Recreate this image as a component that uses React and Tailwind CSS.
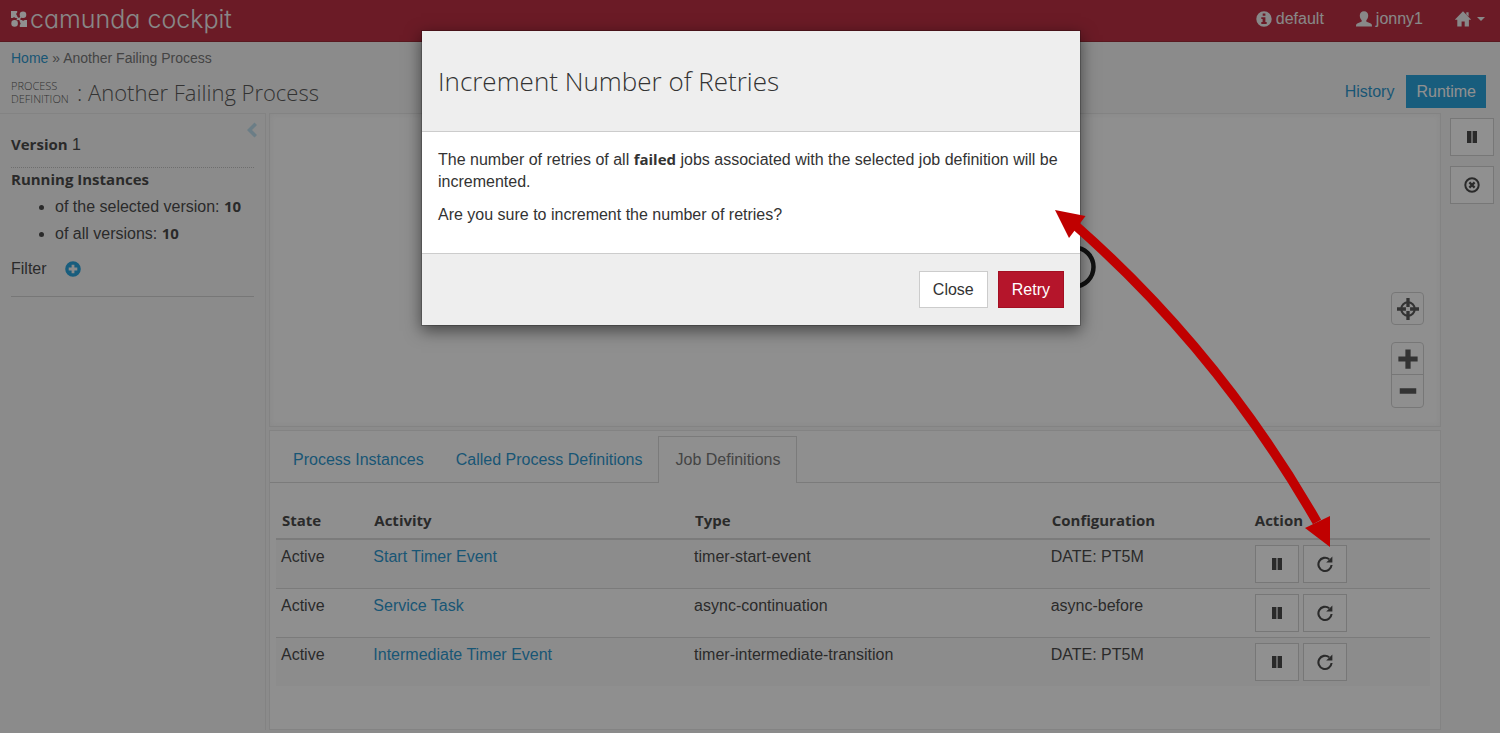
import React from "react";

const GLYPHS = {
  info: (
    <path fillRule="evenodd" d="M8 0.3a7.7 7.7 0 1 0 0 15.4A7.7 7.7 0 0 0 8 0.3zM6.700 2.500h2.700v2.300H6.700zM5.300 6.200h4.100v4.900h1.300v2H5.300v-2h1.300V8.100H5.300z" />
  ),
  user: (
    <path d="M8 0.2c2.600 0 4.200 1.700 4.200 4.400 0 2-.8 3.600-1.800 4.600-.3.400-.3 1.300.3 1.600l4.100 1.700c.9.400 1.200 1.200 1.200 3H0c0-1.800.3-2.600 1.200-3l4.100-1.700c.6-.3.600-1.200.3-1.600-1-1-1.800-2.600-1.800-4.600C3.800 1.900 5.400.2 8 .2z" />
  ),
  home: (
    <path d="M8 .2 16.200 8.800h-2.300V15.600H9.700V10.500H6.600v5.100H2.300V8.800H-.2L8 .2zM11.300 1.300h2.300v4.300l-2.300-2.400z" />
  ),
  pause: <path d="M3 2h4.400v12H3zM8.600 2H13v12H8.600z" />,
  removeCircle: (
    <>
      <circle cx="8" cy="8" r="6.700" fill="none" stroke="currentColor" strokeWidth="2" />
      <path d="M5.400 5.400 10.600 10.600M10.600 5.400 5.400 10.600" fill="none" stroke="currentColor" strokeWidth="2.200" />
    </>
  ),
  repeat: (
    <>
      <path d="M12.200 3.200A6.600 6.600 0 1 0 14.600 9" fill="none" stroke="currentColor" strokeWidth="2.100" />
      <path d="M15.400 .4v6.200H9.200z" />
    </>
  ),
  chevronLeft: <path d="M10.500 .6 13 3.100 8 8l5 4.900-2.500 2.500L3 8z" />,
  plus: <path d="M6.100 1h3.800v5.100H15v3.800H9.900V15H6.100V9.900H1V6.100h5.100z" />,
  minus: <path d="M2 6h12v4H2z" />,
  plusCircle: (
    <path fillRule="evenodd" d="M8 .2a7.800 7.800 0 1 0 0 15.600A7.800 7.800 0 0 0 8 .2zM6.600 3.700h2.800v2.900h2.900v2.800H9.400v2.900H6.600V9.400H3.700V6.600h2.900z" />
  ),
  screenshot: (
    <>
      <circle cx="8" cy="8" r="4.900" fill="none" stroke="currentColor" strokeWidth="1.500" />
      <path d="M6.800 0h2.400v6.500H6.800zM6.800 9.500h2.400V16H6.800zM0 6.800h6.500v2.400H0zM9.500 6.800H16v2.400H9.500z" />
    </>
  ),
};

function Glyph({ name, className = "size-4" }) {
  return (
    <svg viewBox="0 0 16 16" fill="currentColor" aria-hidden="true" className={className}>
      {GLYPHS[name]}
    </svg>
  );
}

function LogoMark() {
  return (
    <svg viewBox="0 0 16 16" fill="currentColor" aria-hidden="true" className="size-4">
      <path d="M0 0h6.200v1.500a1.800 1.800 0 0 0 0 3.200V7H4.600a1.800 1.800 0 0 0-3 0H0z" />
      <circle cx="12" cy="3.700" r="3.300" />
      <circle cx="3.600" cy="12.400" r="3.300" />
      <path d="M8.800 16V14a1.800 1.800 0 0 0 0-3V9h2a1.600 1.600 0 0 0 2.800 0H16v7z" />
      <path d="M5 5.500l3 2.500 3.500 3.500M10 6 8 8 5.700 8.500" fill="none" stroke="currentColor" strokeWidth="1.400" />
    </svg>
  );
}

function IconButton({ icon, label }) {
  return (
    <button
      type="button"
      aria-label={label}
      className="flex h-[38px] w-11 items-center justify-center border border-[#ccc] bg-white text-[#333]"
    >
      <Glyph name={icon} />
    </button>
  );
}

function Header() {
  return (
    <header className="flex h-[42px] items-center justify-between border-b border-[#92101f] bg-[#b5152b] pr-[15px] pb-[3px] pl-[11px] text-white">
      <a href="#home" className="flex items-center gap-[3px]">
        <LogoMark />
        <span className="font-['Inter','Open_Sans',sans-serif] text-[25px] leading-9 font-light text-[#eee] [font-feature-settings:'cv11']">
          camunda cockpit
        </span>
      </a>
      <nav className="flex items-center gap-8 text-[#eee]">
        <a href="#engine" className="flex items-center gap-1">
          <Glyph name="info" />
          default
        </a>
        <a href="#user" className="flex items-center gap-1">
          <Glyph name="user" />
          jonny1
        </a>
        <a href="#apps" aria-label="Apps" className="flex items-center gap-1.5">
          <Glyph name="home" />
          <svg viewBox="0 0 8 4" fill="currentColor" aria-hidden="true" className="h-1 w-2">
            <path d="M0 0h8L4 4z" />
          </svg>
        </a>
      </nav>
    </header>
  );
}

function TitleBar() {
  return (
    <div className="h-[71px] pr-[14px] pl-[11px] pt-1.5">
      <div className="text-[14px] leading-5 text-[#666]">
        <a href="#home" className="text-[#0e8ac8]">Home</a> » Another Failing Process
      </div>
      <div className="flex items-center justify-between pt-[7px]">
        <h1 className="flex items-center font-['Open_Sans',sans-serif] text-[#444]">
          <span className="w-[66px] text-[11px] leading-[13px] font-light">
            PROCESS
            <br />
            DEFINITION
          </span>
          <span className="text-[22px] leading-8 font-light">: Another Failing Process</span>
        </h1>
        <nav className="flex">
          <a href="#history" className="px-3 leading-[33px] text-[#0e8ac8]">History</a>
          <a href="#runtime" className="bg-[#0e98d8] px-2.5 leading-[33px] text-white">Runtime</a>
        </nav>
      </div>
    </div>
  );
}

const strong = "font-['Open_Sans',sans-serif] text-[15px] font-bold";

function Sidebar() {
  return (
    <aside className="w-[266px] shrink-0 border-t border-r border-[#e4e4e4] pr-[11px] pl-[11px]">
      <div className="flex h-[54px] justify-between border-b border-dotted border-[#bbb]">
        <p className="pt-[19px] leading-[22px]">
          <span className={strong}>Version</span> 1
        </p>
        <button type="button" aria-label="Collapse sidebar" className="mt-2 -mr-1.5 h-4 text-[#b4d9ea]">
          <Glyph name="chevronLeft" />
        </button>
      </div>
      <h2 className={`${strong} leading-[22px]`}>Running Instances</h2>
      <ul className="list-disc pt-[3px] pl-11 leading-[27px]">
        <li>of the selected version: <b className={strong}>10</b></li>
        <li>of all versions: <b className={strong}>10</b></li>
      </ul>
      <div className="flex h-[50px] items-center gap-[18px] border-b border-[#ccc] pb-1.5">
        Filter
        <button type="button" aria-label="Add filter" className="text-[#0e98d8]">
          <Glyph name="plusCircle" />
        </button>
      </div>
    </aside>
  );
}

function Diagram() {
  const zoomButton = "flex h-8 items-center justify-center text-[#444]";
  return (
    <section className="relative h-[314px] border border-[#e4e4e4] bg-[#fdfdfd] shadow-[inset_0_0_6px_#eee]">
      <svg viewBox="0 0 44 44" aria-hidden="true" className="absolute top-[131px] right-[344px] size-11">
        <circle cx="22" cy="22" r="19.500" fill="none" stroke="#000" strokeWidth="4.500" />
      </svg>
      <div className="absolute top-[178px] right-4 flex flex-col gap-[17px]">
        <button type="button" aria-label="Reset zoom" className="flex size-[33px] items-center justify-center rounded-sm border border-[#ccc] text-[#444]">
          <Glyph name="screenshot" className="size-[22px]" />
        </button>
        <div className="flex w-[33px] flex-col divide-y divide-[#ccc] rounded-sm border border-[#ccc]">
          <button type="button" aria-label="Zoom in" className={zoomButton}>
            <Glyph name="plus" className="size-[22px]" />
          </button>
          <button type="button" aria-label="Zoom out" className={zoomButton}>
            <Glyph name="minus" className="size-[22px]" />
          </button>
        </div>
      </div>
    </section>
  );
}

const JOBS = [
  ["Active", "Start Timer Event", "timer-start-event", "DATE: PT5M"],
  ["Active", "Service Task", "async-continuation", "async-before"],
  ["Active", "Intermediate Timer Event", "timer-intermediate-transition", "DATE: PT5M"],
];

function JobDefinitions() {
  const head = `${strong} px-1.5 pt-[5px] pb-[7px] leading-[22px]`;
  const cell = "px-[5px] py-[5px]";
  return (
    <section className="flex-1 border border-[#e4e4e4] bg-[#fdfdfd]">
      <div role="tablist" className="flex h-[52px] items-end border-b border-[#d4d4d4] pl-[7px] leading-[45px]">
        <button type="button" role="tab" aria-selected="false" className="px-4 text-[#0e8ac8]">
          Process Instances
        </button>
        <button type="button" role="tab" aria-selected="false" className="px-4 text-[#0e8ac8]">
          Called Process Definitions
        </button>
        <button type="button" role="tab" aria-selected="true" className="-mb-px border border-b-0 border-[#d4d4d4] bg-[#fdfdfd] px-4 pb-px text-[#666]">
          Job Definitions
        </button>
      </div>
      <div className="pt-[21px] pr-2.5 pl-1.5">
        <table className="w-full table-fixed border-collapse text-left">
          <thead>
            <tr className="border-b-2 border-[#d4d4d4]">
              <th className={`${head} w-[8%]`}>State</th>
              <th className={`${head} w-[27.8%]`}>Activity</th>
              <th className={`${head} w-[30.9%]`}>Type</th>
              <th className={`${head} w-[17.6%]`}>Configuration</th>
              <th className={head}>Action</th>
            </tr>
          </thead>
          <tbody className="align-top leading-6">
            {JOBS.map(([state, activity, type, config]) => (
              <tr key={activity} className="border-t border-[#d4d4d4] odd:bg-[#f7f7f7]">
                <td className={cell}>{state}</td>
                <td className={cell}><a href="#activity" className="text-[#0e8ac8]">{activity}</a></td>
                <td className={cell}>{type}</td>
                <td className={cell}>{config}</td>
                <td className="px-1.5 py-[5px]">
                  <div className="flex gap-1">
                    <IconButton icon="pause" label={`Suspend ${activity}`} />
                    <IconButton icon="repeat" label={`Retry ${activity}`} />
                  </div>
                </td>
              </tr>
            ))}
          </tbody>
        </table>
      </div>
    </section>
  );
}

function RetryDialog() {
  return (
    <div className="absolute inset-0 flex items-start justify-center bg-[#222]/50 pt-[30px]">
      <div
        role="dialog"
        aria-modal="true"
        aria-labelledby="dialog-title"
        className="ml-0.5 w-[660px] border border-black/20 bg-[#eee] bg-clip-padding shadow-[0_5px_15px_rgba(0,0,0,0.5)]"
      >
        <h2 id="dialog-title" className="border-b border-[#ccc] px-4 py-[30px] font-['Open_Sans',sans-serif] text-[26px] leading-10 font-light">
          Increment Number of Retries
        </h2>
        <div className="bg-white px-4 pt-4 pb-[27px] leading-[22px]">
          <p>
            The number of retries of all <b className={strong}>failed</b> jobs associated with the selected job definition will be incremented.
          </p>
          <p className="pt-[11px]">Are you sure to increment the number of retries?</p>
        </div>
        <div className="flex justify-end gap-2.5 border-t border-[#ccc] px-4 py-[17px]">
          <button type="button" className="h-[37px] border border-[#ccc] bg-white px-[13px]">Close</button>
          <button type="button" className="h-[37px] border border-[#a30f22] bg-[#b5152b] px-[13px] text-white">Retry</button>
        </div>
      </div>
      <svg viewBox="0 0 276 338" aria-hidden="true" className="absolute top-[210px] left-1/2 ml-[305px] h-[338px] w-[276px]" fill="#c00000">
        <path d="M20 15Q165 142.500 262 312" fill="none" stroke="#c00000" strokeWidth="9.500" />
        <path d="M0 0 30.500 6 14 28zM275 337 250 318 275 306z" />
      </svg>
    </div>
  );
}

export default function App() {
  return (
    <div className="relative flex min-h-screen flex-col overflow-hidden bg-[#f5f5f5] pb-[3px] font-['Liberation_Sans',Arial,sans-serif] text-[16px] text-[#333]">
      <Header />
      <TitleBar />
      <main className="flex flex-1">
        <Sidebar />
        <div className="flex min-w-0 flex-1 flex-col gap-[3px] pl-[3px]">
          <Diagram />
          <JobDefinitions />
        </div>
        <div className="flex w-[59px] shrink-0 flex-col gap-2.5 pt-[5px] pl-[9px]">
          <IconButton icon="pause" label="Suspend process definition" />
          <IconButton icon="removeCircle" label="Cancel process definition" />
        </div>
      </main>
      <RetryDialog />
    </div>
  );
}
